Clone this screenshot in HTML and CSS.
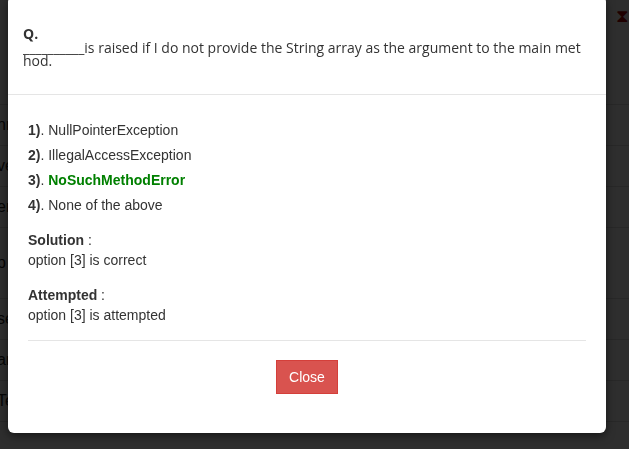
FILE: index.html
```html
<!DOCTYPE html>
<html>
<head>
<meta charset="utf-8">
<link rel="stylesheet" href="styles.css">
</head>
<body>
<div class="page">
  <div class="topbar"><span class="hourglass">&#x29D7;</span></div>
  <div class="row r1"><span class="frag">nm</span></div>
  <div class="row r2"><span class="frag">ve</span></div>
  <div class="row r3"><span class="frag">er</span></div>
  <div class="row r4"><span class="frag">p</span></div>
  <div class="row r5"><span class="frag">se</span></div>
  <div class="row r6"><span class="frag">ar</span></div>
  <div class="row r7"><span class="frag">Te</span></div>
</div>
<div class="overlay"></div>
<div class="modal">
  <div class="modal-header">
    <div class="q">Q.</div>
    <div class="question">__________is raised if I do not provide the String array as the argument to the main method.</div>
  </div>
  <div class="modal-body">
    <ul class="options">
      <li><b>1)</b>. NullPointerException</li>
      <li><b>2)</b>. IllegalAccessException</li>
      <li><b>3)</b>. <span class="correct">NoSuchMethodError</span></li>
      <li><b>4)</b>. None of the above</li>
    </ul>
    <div class="result">
      <div><b>Solution</b> :</div>
      <div>option [3] is correct</div>
    </div>
    <div class="result">
      <div><b>Attempted</b> :</div>
      <div>option [3] is attempted</div>
    </div>
    <hr class="divider">
    <div class="actions"><button class="btn-close">Close</button></div>
  </div>
</div>
</body>
</html>
```
FILE: styles.css
```css
html, body { margin: 0; padding: 0; }
body {
  background: #fff;
  font-family: "Liberation Sans", Arial, sans-serif;
  font-size: 14px;
  color: #333;
  height: 449px;
  overflow: hidden;
}
.topbar { height: 104px; border-bottom: 1px solid #ddd; display: flex; justify-content: flex-end; }
.hourglass { color: #a00; font-size: 18px; margin: 6px 0 0 0; }
.row { border-bottom: 1px solid #ddd; font-size: 16px; color: #222; display: flex; align-items: center; overflow: hidden; }
.r1 { height: 40px; }
.r2 { height: 40px; }
.r3 { height: 40px; }
.r4 { height: 70px; }
.r5 { height: 40px; }
.r6 { height: 40px; }
.r7 { height: 40px; }
.frag { margin-left: -3px; }
.overlay {
  position: fixed;
  inset: 0;
  background: rgba(0, 0, 0, 0.82);
}
.modal {
  position: absolute;
  left: 8px;
  top: -4px;
  width: 598px;
  background: #fff;
  border-radius: 6px;
  box-shadow: 0 3px 9px rgba(0, 0, 0, 0.5);
}
.modal-header {
  padding: 30px 20px 27px 15px;
  border-bottom: 1px solid #e5e5e5;
  font-family: "Open Sans", sans-serif;
  font-size: 14px;
  color: #333;
}
.q { font-weight: bold; line-height: 15px; }
.question { line-height: 13px; word-break: break-all; }
.modal-body { padding: 23px 20px 39px 20px; }
.options { list-style: none; margin: 0; padding: 0; }
.options li { line-height: 25px; }
.correct { color: #008000; font-weight: bold; }
.result { margin-top: 12px; line-height: 20px; }
.result + .result { margin-top: 15px; }
.divider { border: 0; border-top: 1px solid #e5e5e5; margin: 15px 0 19px 0; }
.actions { display: flex; justify-content: center; }
.btn-close {
  background: #d9534f;
  border: 1px solid #d43f3a;
  color: #fff;
  font-family: "Liberation Sans", Arial, sans-serif;
  font-size: 14px;
  padding: 8px 12px;
  line-height: 16px;
  border-radius: 0;
}
```
